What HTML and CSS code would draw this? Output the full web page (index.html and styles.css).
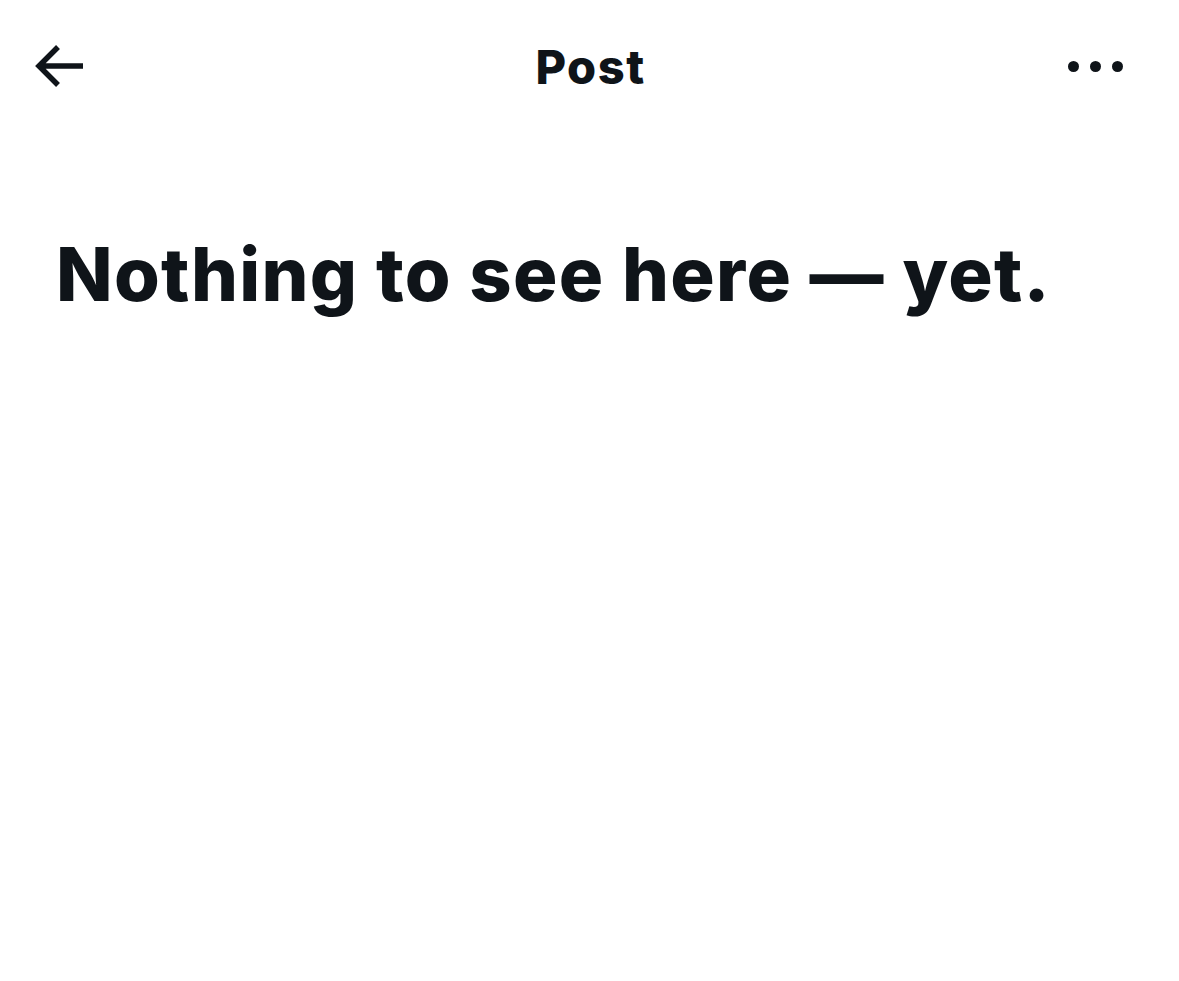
FILE: index.html
```html
<!DOCTYPE html>
<html lang="en">
<head>
    <meta charset="UTF-8">
    <meta name="viewport" content="width=device-width, initial-scale=1.0">
    <title>Post</title>
    <link rel="stylesheet" href="styles.css">
</head>
<body>
    <!-- Top bar -->
    <header class="topbar">
        <a class="back" href="#" aria-label="Back">
            <svg viewBox="0 0 50 44" width="50" height="44">
                <path d="M49 22H6M24 3L5 22l19 19" fill="none" stroke="#0f1419" stroke-width="5.5"/>
            </svg>
        </a>
        <h1 class="title">Post</h1>
        <a class="more" href="#" aria-label="More">
            <span class="dot"></span><span class="dot"></span><span class="dot"></span>
        </a>
    </header>

    <main class="empty">
        <h2>Nothing to see here — yet.</h2>
    </main>
</body>
</html>
```

FILE: styles.css
```css
body {
    margin: 0;
    background: #fff;
    color: #0f1419;
    font-family: Inter, "Noto Sans", sans-serif;
}
.topbar {
    display: grid;
    grid-template-columns: 1fr auto 1fr;
    align-items: center;
    height: 132px;
    padding: 0 56px 0 34px;
    box-sizing: border-box;
}
.back {
    display: flex;
}
.title {
    margin: 0;
    font-size: 47px;
    font-weight: 800;
    letter-spacing: 1.5px;
    padding-left: 24px;
}
.more {
    display: flex;
    gap: 11px;
    justify-content: flex-end;
}
.dot {
    width: 11px;
    height: 11px;
    border-radius: 50%;
    background: #0f1419;
}
.empty {
    padding: 98px 56px 0;
}
.empty h2 {
    margin: 0;
    font-size: 74px;
    font-weight: 800;
    letter-spacing: 1.3px;
    line-height: 1.2;
}
```
